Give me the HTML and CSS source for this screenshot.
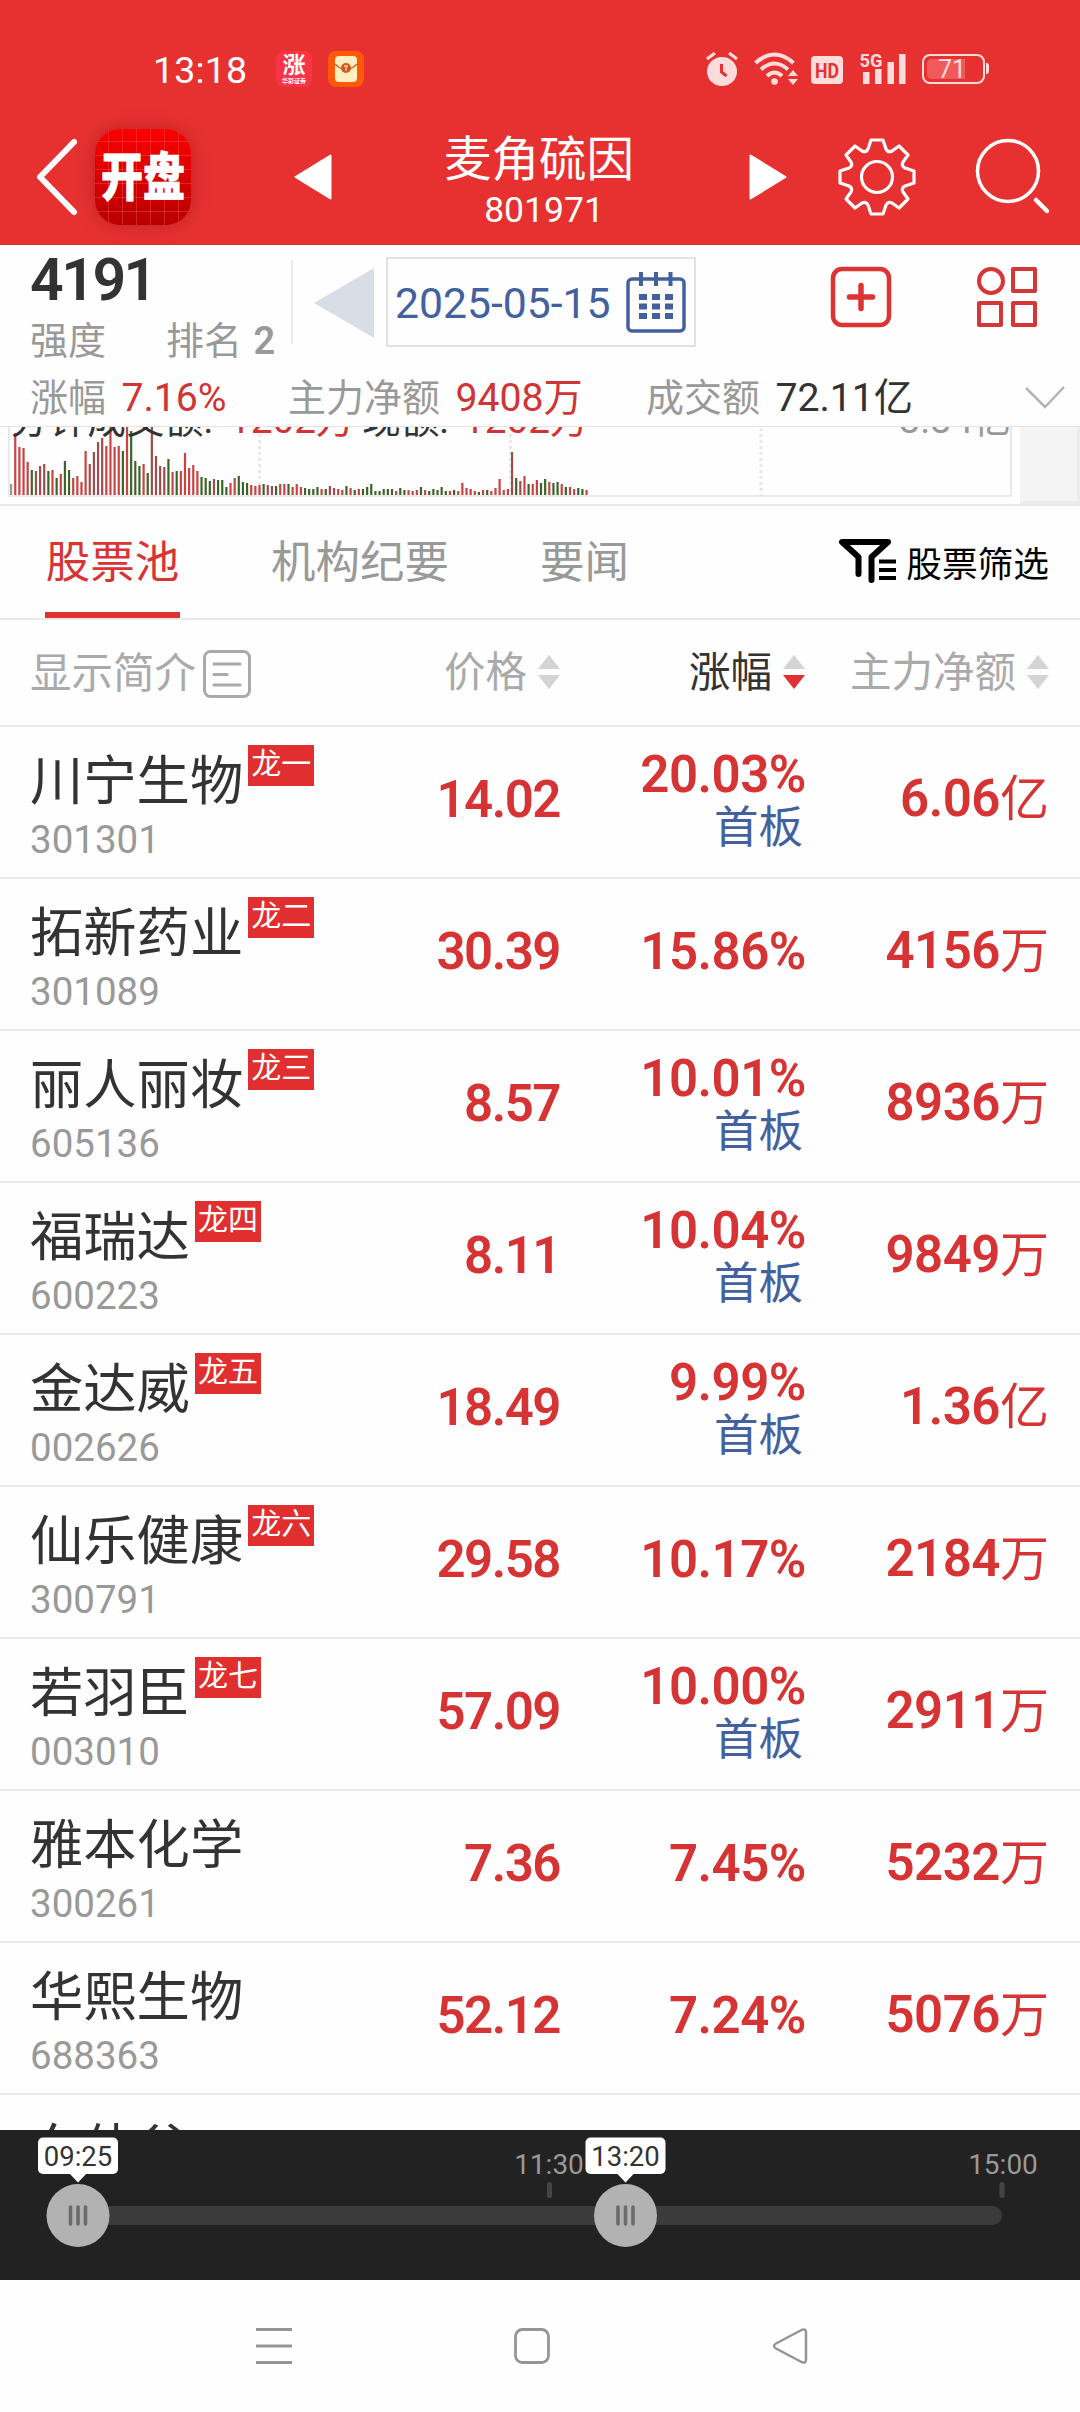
FILE: index.html
```html
<!DOCTYPE html>
<html lang="zh-CN">
<head>
<meta charset="utf-8">
<title>麦角硫因 801971</title>
<link rel="stylesheet" href="styles.css">
</head>
<body>
<div class="screen">
  <header class="top">
    <div class="status">
      <span class="clock">13:18</span>
      <span class="notif notif-zhang"><b>涨</b><i>华彩证券</i></span>
      <svg class="notif-mail" width="36" height="36" viewBox="0 0 36 36"><rect width="36" height="36" rx="8" fill="#fc5a08"/><rect x="7" y="5" width="22" height="26" rx="4" fill="#feeec0"/><path d="M7 13 Q12 18 18 19 Q24 18 29 13" fill="none" stroke="#d4561a" stroke-width="1.2"/><circle cx="18" cy="17" r="5" fill="#cf5a20"/><path d="M16 15h4M18 15v5" stroke="#f9cf9b" stroke-width="1.3"/></svg>
      <svg class="sys" width="290" height="40" viewBox="700 50 290 40">
        <g fill="#ffdcdc">
          <ellipse cx="722" cy="71.500" rx="15" ry="14.500"/>
          <path d="M707 59l8-6M737 59l-8-6" stroke="#ffdcdc" stroke-width="3.200"/>
          <path d="M721.500 64v8l5 4" fill="none" stroke="#e73131" stroke-width="3"/>
          <circle cx="774.500" cy="81.500" r="3.300"/>
          <path d="M788 76h10l-5-6zM788 79h10l-5 6z"/>
          <rect x="811" y="56" width="32" height="28" rx="4"/>
          <rect x="863" y="72" width="6.500" height="12"/><rect x="875" y="69" width="6.500" height="15"/><rect x="887.500" y="62" width="6.500" height="22"/><rect x="899" y="54" width="6.500" height="30"/>
          <path d="M986 63q3 0 3 3v5q0 3-3 3z"/>
        </g>
        <g fill="none" stroke="#ffdcdc" stroke-width="4">
          <path d="M755.500 63q19-17 38 0M761 69.500q13.500-12 27 0M767 76q7.500-7 15 0"/>
        </g>
        <rect x="923" y="55" width="61" height="28" rx="7" fill="none" stroke="#ffdcdc" stroke-width="2"/>
        <path d="M965 59v20h-33q-5 0-5-5v-10q0-5 5-5z" fill="#f05a5a"/>
        <text x="827" y="78" text-anchor="middle" class="t-hd" textLength="24" lengthAdjust="spacingAndGlyphs">HD</text>
        <text x="859.500" y="67" class="t-5g" textLength="23" lengthAdjust="spacingAndGlyphs">5G</text>
        <text x="952" y="78" text-anchor="middle" class="t-bat">71</text>
      </svg>
    </div>
    <div class="titlebar">
      <svg class="back" width="44" height="80" viewBox="0 0 44 80"><path d="M39 5 L5 40 L39 75" fill="none" stroke="#fff" stroke-width="6" stroke-linecap="round" stroke-linejoin="round"/></svg>
      <div class="appicon"><span>开盘</span></div>
      <svg class="prev" width="38" height="46" viewBox="0 0 38 46"><path d="M36.500 1.500v43L1.500 23z" fill="#fff" stroke="#fff" stroke-width="2" stroke-linejoin="round"/></svg>
      <div class="title"><h1>麦角硫因</h1><p>801971</p></div>
      <svg class="next" width="38" height="46" viewBox="0 0 38 46"><path d="M1.500 1.500v43L36.500 23z" fill="#fff" stroke="#fff" stroke-width="2" stroke-linejoin="round"/></svg>
      <svg class="gear" width="80" height="80" viewBox="-40 -40 80 80"><g fill="none" stroke="#fff" stroke-width="3.200" stroke-linejoin="round"><path d="M-6-37H6L9-28Q11-24 15-26L22-31L31-22L26-15Q24-11 28-9L37-6V6L28 9Q24 11 26 15L31 22L22 31L15 26Q11 24 9 28L6 37H-6L-9 28Q-11 24-15 26L-22 31L-31 22L-26 15Q-24 11-28 9L-37 6V-6L-28-9Q-24-11-26-15L-31-22L-22-31L-15-26Q-11-24-9-28Z"/><circle r="15.500"/></g></svg>
      <svg class="search" width="80" height="80" viewBox="0 0 80 80"><circle cx="35" cy="34" r="30.500" fill="none" stroke="#fff" stroke-width="3.500"/><path d="M63 63l11 11" stroke="#fff" stroke-width="4.500" stroke-linecap="round"/></svg>
    </div>
  </header>

  <section class="summary">
    <div class="sumtop">
      <div class="score">
        <strong>4191</strong>
        <div class="rank"><span>强度</span><span>排名 <b>2</b></span></div>
      </div>
      <svg class="dayprev" width="62" height="72" viewBox="0 0 62 72"><path d="M60 1v70L0 36z" fill="#d9dee6"/></svg>
      <div class="date"><span>2025-05-15</span>
        <svg width="60" height="62" viewBox="0 0 60 62"><g fill="none" stroke="#43619f" stroke-width="3.500"><rect x="2" y="8" width="56" height="52" rx="4"/><path d="M15 1v14M30 1v14M44.500 1v14" stroke-width="4"/></g><path d="M17 23v26M30 23v26M43 23v26" stroke="#43619f" stroke-width="8" stroke-dasharray="6 3.500"/></svg>
      </div>
      <svg class="plus" width="62" height="62" viewBox="0 0 62 62"><rect x="3" y="3" width="56" height="56" rx="9" fill="none" stroke="#dc3333" stroke-width="4.500"/><path d="M31 19.500v23M19.500 31h23" stroke="#dc3333" stroke-width="5.500" stroke-linecap="round"/></svg>
      <svg class="apps" width="62" height="62" viewBox="0 0 62 62"><g fill="none" stroke="#d63636" stroke-width="4" stroke-linejoin="round"><circle cx="15" cy="15" r="12"/><rect x="37" y="3" width="22" height="22"/><rect x="3" y="37" width="22" height="22"/><rect x="37" y="37" width="22" height="22"/></g></svg>
    </div>
    <div class="figures">
      <span class="f1">涨幅 <em>7.16%</em></span>
      <span class="f2">主力净额 <em>9408万</em></span>
      <span class="f3">成交额 <em class="dark">72.11亿</em></span>
      <svg width="40" height="24" viewBox="0 0 40 24"><path d="M1 2l19 19L39 1" fill="none" stroke="#b4b4b4" stroke-width="2.500"/></svg>
    </div>
  </section>

  <section class="chart">
    <svg width="1012" height="70" viewBox="0 0 1012 70">
      <path d="M9 0V69H1011V0" fill="none" stroke="#e9e9e9" stroke-width="2"/>
      <path d="M259.500 1V68M510.500 1V68M761 1V68" stroke="#e8e8e8" stroke-width="3" stroke-dasharray="3 3"/>
      <g id="bars"></g>
      <text x="10" y="6" class="t-vol">分钟成交额:<tspan class="up" x="229">1202万</tspan><tspan x="362">现额:</tspan><tspan class="up" x="463">1202万</tspan></text>
      <text x="1011" y="6" text-anchor="end" class="t-max">3.34亿</text>
    </svg>
    <div class="side"></div>
  </section>

  <nav class="tabs">
    <a class="on">股票池</a><a>机构纪要</a><a>要闻</a>
    <div class="filter"><svg width="60" height="46" viewBox="0 0 60 46"><path d="M20.500 36V19L4 4H50L33.500 19V42" fill="none" stroke="#000" stroke-width="6" stroke-linecap="round" stroke-linejoin="round"/><path d="M41 23.500h17M41 32h17M41 40h17" stroke="#000" stroke-width="4"/></svg>股票筛选</div>
  </nav>

  <div class="cols head">
    <div class="intro">显示简介<svg width="48" height="48" viewBox="0 0 48 48"><rect x="1.500" y="1.500" width="45" height="45" rx="6" fill="none" stroke="#aaa" stroke-width="3"/><path d="M11 14h26M11 24.500h13M11 35h26" stroke="#aaa" stroke-width="3.200" stroke-linecap="round"/></svg></div>
    <div>价格<svg class="sort" width="22" height="34" viewBox="0 0 22 34"><path d="M0 14L11 0L22 14z" fill="#d4d4d4"/><path d="M0 20h22L11 34z" fill="#d4d4d4"/></svg></div>
    <div class="active">涨幅<svg class="sort" width="22" height="34" viewBox="0 0 22 34"><path d="M0 14L11 0L22 14z" fill="#d4d4d4"/><path d="M0 20h22L11 34z" fill="#e23030"/></svg></div>
    <div>主力净额<svg class="sort" width="22" height="34" viewBox="0 0 22 34"><path d="M0 14L11 0L22 14z" fill="#d4d4d4"/><path d="M0 20h22L11 34z" fill="#d4d4d4"/></svg></div>
  </div>

  <main class="list">
    <div class="cols row"><div class="stock"><h2>川宁生物<mark>龙一</mark></h2><p>301301</p></div><div class="num price">14.02</div><div class="num">20.03%<small>首板</small></div><div class="num">6.06<i>亿</i></div></div>
    <div class="cols row"><div class="stock"><h2>拓新药业<mark>龙二</mark></h2><p>301089</p></div><div class="num price">30.39</div><div class="num">15.86%</div><div class="num">4156<i>万</i></div></div>
    <div class="cols row"><div class="stock"><h2>丽人丽妆<mark>龙三</mark></h2><p>605136</p></div><div class="num price">8.57</div><div class="num">10.01%<small>首板</small></div><div class="num">8936<i>万</i></div></div>
    <div class="cols row"><div class="stock"><h2>福瑞达<mark>龙四</mark></h2><p>600223</p></div><div class="num price">8.11</div><div class="num">10.04%<small>首板</small></div><div class="num">9849<i>万</i></div></div>
    <div class="cols row"><div class="stock"><h2>金达威<mark>龙五</mark></h2><p>002626</p></div><div class="num price">18.49</div><div class="num">9.99%<small>首板</small></div><div class="num">1.36<i>亿</i></div></div>
    <div class="cols row"><div class="stock"><h2>仙乐健康<mark>龙六</mark></h2><p>300791</p></div><div class="num price">29.58</div><div class="num">10.17%</div><div class="num">2184<i>万</i></div></div>
    <div class="cols row"><div class="stock"><h2>若羽臣<mark>龙七</mark></h2><p>003010</p></div><div class="num price">57.09</div><div class="num">10.00%<small>首板</small></div><div class="num">2911<i>万</i></div></div>
    <div class="cols row"><div class="stock"><h2>雅本化学</h2><p>300261</p></div><div class="num price">7.36</div><div class="num">7.45%</div><div class="num">5232<i>万</i></div></div>
    <div class="cols row"><div class="stock"><h2>华熙生物</h2><p>688363</p></div><div class="num price">52.12</div><div class="num">7.24%</div><div class="num">5076<i>万</i></div></div>
    <div class="cols row"><div class="stock"><h2>东体谷</h2></div></div>
  </main>

  <footer class="timeline">
    <svg width="1080" height="150" viewBox="0 0 1080 150">
      <rect x="60" y="76" width="942" height="19" rx="9.500" fill="#3b3b3b"/>
      <rect x="547" y="52" width="5" height="16" rx="2.500" fill="#444"/><rect x="999.500" y="52" width="5" height="16" rx="2.500" fill="#444"/>
      <text x="549" y="44" class="t-tick">11:30</text><text x="1003" y="44" class="t-tick">15:00</text>
      <g id="start" transform="translate(78 0)"><rect x="-40" y="7.500" width="80" height="36.500" rx="5" fill="#fff"/><path d="M-9 43h18l-9 9.500z" fill="#fff"/><circle cy="85.500" r="31.500" fill="#b2b2b2"/><path d="M-7.500 77v17M0 77v17M7.500 77v17" stroke="#6b6b6b" stroke-width="3.600" stroke-linecap="round"/><text y="36" class="t-bub">09:25</text></g>
      <g id="now" transform="translate(625.500 0)"><rect x="-40" y="7.500" width="80" height="36.500" rx="5" fill="#fff"/><path d="M-9 43h18l-9 9.500z" fill="#fff"/><circle cy="85.500" r="31.500" fill="#b2b2b2"/><path d="M-7.500 77v17M0 77v17M7.500 77v17" stroke="#6b6b6b" stroke-width="3.600" stroke-linecap="round"/><text y="36" class="t-bub">13:20</text></g>
    </svg>
  </footer>
  <div class="sysnav">
    <svg width="36" height="36" viewBox="0 0 36 36"><path d="M0 1.500h36M0 18h36M0 34.500h36" stroke="#959595" stroke-width="3"/></svg>
    <svg width="36" height="36" viewBox="0 0 36 36"><rect x="1.500" y="1.500" width="33" height="33" rx="7" fill="none" stroke="#959595" stroke-width="2.800"/></svg>
    <svg width="36" height="36" viewBox="0 0 36 36"><path d="M29.500 2Q34 0 34 4.500V31.500Q34 36 29.500 34L4 20.500Q0 18 4 15.500Z" fill="none" stroke="#959595" stroke-width="2.500"/></svg>
  </div>
</div>
<script src="chart.js"></script>
</body>
</html>
```
FILE: styles.css
```css
* { box-sizing: border-box; margin: 0; padding: 0; }
body { background: #fefefe; font-family: Roboto, "Noto Sans CJK SC", sans-serif; color: #333; }
svg { display: block; flex: none; }
h1, h2 { font-weight: 400; }
i, em { font-style: normal; }
.screen { width: 1080px; height: 2412px; overflow: hidden; display: flex; flex-direction: column; background: #fefefe; }

.top { height: 245px; background: #e73131; color: #fff; flex: none; border-bottom: 1px solid #c33; }
.status { height: 110px; padding: 51px 0 0 153px; display: flex; align-items: flex-start; }
.clock { width: 123px; font-size: 37.500px; line-height: 38px; letter-spacing: .2px; white-space: nowrap; }
.notif { width: 36px; height: 36px; border-radius: 8px; background: #fa3347; display: flex; flex-direction: column; align-items: center; margin-right: 16px; overflow: hidden; }
.notif b { font-size: 23px; line-height: 23px; margin-top: 3px; font-weight: 700; }
.notif i { font-size: 6px; line-height: 7px; font-weight: 700; }
.sys { margin: -1px 0 0 336px; }
.t-hd { font: 700 20px Roboto; fill: #e73131; }
.t-5g { font: 700 19px Roboto; fill: #ffdcdc; }
.t-bat { font: 400 25px Roboto; fill: #ffdcdc; }
.titlebar { height: 134px; display: flex; align-items: center; padding-left: 35px; }
.appicon { width: 96px; height: 96px; margin-left: 16px; border-radius: 25px; display: flex; align-items: center; justify-content: center;
  background: repeating-linear-gradient(90deg, transparent 0 13px, rgba(255,120,120,.3) 13px 14px), repeating-linear-gradient(0deg, transparent 0 13px, rgba(255,120,120,.3) 13px 14px), linear-gradient(#fb0000, #b80000);
  box-shadow: 0 0 18px rgba(120,0,0,.35); }
.appicon span { font-size: 42px; line-height: 52px; font-weight: 900; -webkit-text-stroke: .6px #fff; white-space: nowrap; transform: translateY(1px) scaleY(1.250); }
.prev { margin-left: 103px; }
.title { width: 200px; margin: 9px 0 0 107px; text-align: center; white-space: nowrap; }
.title h1 { font-size: 47.500px; line-height: 56px; }
.title p { font-size: 35.500px; line-height: 42px; margin: 1px -10px 0 0; }
.next { margin-left: 110px; }
.gear { margin-left: 50px; }
.search { margin-left: 56px; }

.summary { height: 182px; flex: none; border-bottom: 1px solid #e4e4e4; }
.sumtop { height: 128px; display: flex; align-items: flex-start; padding-left: 30px; }
.score { width: 263px; height: 84px; margin-top: 15px; border-right: 2px solid #ebebeb; }
.score strong { display: block; font-size: 59px; line-height: 44px; font-weight: 600; letter-spacing: -2.500px; position: relative; top: -2px; }
.rank { display: flex; gap: 60px; font-size: 38px; line-height: 48px; color: #999; margin-top: 13px; white-space: nowrap; }
.rank b { font-weight: 600; margin-left: 2px; }
.dayprev { margin: 22px 0 0 21px; }
.date { width: 310px; height: 90px; margin: 12px 0 0 10px; border: 2px solid #e1e1e1; display: flex; align-items: center; padding-left: 7px; gap: 16px; font-size: 42.700px; line-height: 50px; color: #43619f; white-space: nowrap; }
.date span { width: 215px; padding-top: 1px; }
.plus { margin: 21px 0 0 134px; }
.apps { margin: 21px 0 0 84px; }
.figures { height: 53px; padding: 0 0 4px 30px; display: flex; align-items: center; font-size: 38px; line-height: 48px; color: #999; white-space: nowrap; }
.figures em { color: #cf3535; font-size: 39.200px; margin-left: 6px; }
.figures em.dark { color: #333; }
.figures span { flex: none; }
.f1 { width: 258px; }
.f2 { width: 358px; }
.f3 { width: 379px; }

.chart { height: 79px; flex: none; display: flex; justify-content: space-between; border-bottom: 2px solid #e9e9e9; overflow: hidden; }
.side { width: 60px; height: 77px; background: #f4f4f4; border-right: 3px solid #ececec; border-bottom: 3px solid #ececec; }
.t-vol { font-size: 38.700px; fill: #333; }
.t-vol .up { fill: #cf3535; }
.t-max { font-size: 38px; fill: #999; }

.tabs { height: 114px; flex: none; display: flex; border-bottom: 2px solid #e9e9e9; padding-left: 45px; font-size: 44.500px; color: #999; white-space: nowrap; }
.tabs a { height: 112px; line-height: 114px; margin-right: 91px; }
.tabs a.on { color: #d83434; border-bottom: 6px solid #e13030; width: 135px; text-align: center; }
.filter { margin: 0 31px 0 auto; display: flex; align-items: center; gap: 8px; color: #000; font-size: 35.700px; line-height: 44px; padding-top: 6px; }
.filter svg { margin-top: -9px; }

.cols { display: grid; grid-template-columns: 371px 159px 246px 243px; padding-left: 30px; white-space: nowrap; border-bottom: 2px solid #e9e9e9; }
.head { height: 107px; flex: none; align-items: center; font-size: 41.500px; line-height: 50px; color: #aaa; }
.head > div { display: flex; align-items: center; justify-content: flex-end; gap: 11px; padding-top: 1px; }
.head > .intro { justify-content: flex-start; gap: 7px; padding-top: 2px; }
.head .active { color: #333; padding-right: 1px; }
.head .sort { margin-top: -2px; }

.list { height: 1403px; flex: none; overflow: hidden; }
.row { height: 152px; align-items: center; }
.stock { align-self: start; padding-top: 18px; }
.stock h2 { font-size: 53.300px; line-height: 74px; height: 72px; display: flex; align-items: flex-start; }
.stock mark { background: #e12f2f; color: #fff; font-size: 30px; line-height: 38px; height: 41px; width: 66px; text-align: center; margin-left: 5px; }
.stock p { font-size: 38.500px; line-height: 46px; color: #999; }
.num { text-align: right; font-size: 51px; line-height: 52px; font-weight: 600; color: #d63434; letter-spacing: -.5px; padding-bottom: 5px; }
.num:has(small) { padding-bottom: 0; }
.price { letter-spacing: -1.500px; }
.num i { font-weight: 400; font-size: 49px; letter-spacing: 0; }
.num small { display: block; font-size: 44.500px; line-height: 54px; font-weight: 400; color: #43619f; letter-spacing: 0; padding-right: 3px; }

.timeline { height: 150px; flex: none; background: #222; }
.t-tick { font: 400 28px Roboto; fill: #999; text-anchor: middle; }
.t-bub { font: 400 27.500px Roboto; fill: #333; text-anchor: middle; }
.sysnav { height: 132px; flex: none; display: flex; justify-content: space-between; align-items: center; padding: 0 272px 0 256px; }
```
FILE: chart.js
```js
// Per-minute turnover: r = up, d = muted up, g = down, n = neutral, followed by the bar height.
const volume = "n11 r62 r48 r47 r33 g25 d24 d29 d31 g24 r25 g17 r21 g34 g25 r17 r19 r13 r44 d31 d43 d53 d57 r49 r68 r48 r49 g44 r75 g64 g34 g29 r31 g22 d75 d39 d29 d28 g36 r23 g24 r24 r42 r27 r30 r24 g18 g17 g14 d16 g15 g15 g8 r12 r17 g19 g13 g12 r10 r9 r10 g11 d10 d9 g9 r11 r11 g11 r8 r11 r8 g7 g6 g6 g8 r6 g6 d9 d7 r6 r5 g9 r7 g5 r6 g6 g8 g11 g4 g4 g6 g6 g6 r4 g7 g5 r5 r4 r5 g8 r5 g4 g6 g5 g8 g4 r4 g5 r4 r12 r7 r6 r4 g3 r5 g5 r4 r7 r16 r5 r6 d43 g17 d14 r19 g11 r11 r15 g12 g16 r13 g12 g13 r11 g8 r8 r6 g7 g6 r5".split(" ");
const colors = { r: "#c94343", d: "#a04c4c", g: "#3c6428", n: "#999" };
document.getElementById("bars").innerHTML = volume.map((v, i) => {
  const h = +v.slice(1);
  return `<rect x="${(10 + i * 4.14).toFixed(2)}" y="${68 - h}" width="2.2" height="${h}" fill="${colors[v[0]]}"/>`;
}).join("");
```
